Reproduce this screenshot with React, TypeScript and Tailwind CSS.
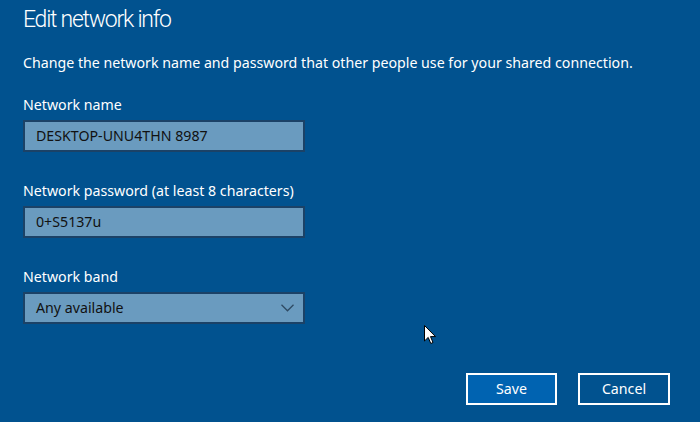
const font = { fontFamily: '"Noto Sans", "Open Sans", sans-serif' };

function Field({ label, value, select }: { label: string; value: string; select?: boolean }) {
  return (
    <div className="flex flex-col">
      <div className="text-[14.2px] leading-[20px] text-white">{label}</div>
      <div className="mt-[5px] flex h-[32px] w-[282px] items-center justify-between border-2 border-[#1b4267] bg-[#6a9bbf] pl-[11px] pr-[8px] text-[14.2px] text-[#111]">
        <span>{value}</span>
        {select && (
          <svg width="13" height="8" viewBox="0 0 13 8" className="mr-[1px]">
            <path d="M0.5 0.8 L6.5 6.8 L12.5 0.8" fill="none" stroke="#2e4a63" strokeWidth="1.3" />
          </svg>
        )}
      </div>
    </div>
  );
}

export default function App() {
  return (
    <div className="relative h-[422px] w-[700px] overflow-hidden bg-[#01528f] pl-[23px] text-white" style={font}>
      <h1
        className="mt-[2px] text-[23px] font-light leading-[36px] tracking-[-1.25px]"
        style={{ fontFamily: 'Roboto, "Noto Sans", sans-serif' }}
      >
        Edit network info
      </h1>
      <p className="mt-[15px] text-[14.2px] leading-[20px]">
        Change the network name and password that other people use for your shared connection.
      </p>
      <div className="mt-[22px] flex flex-col gap-[29px]">
        <Field label="Network name" value="DESKTOP-UNU4THN 8987" />
        <Field label="Network password (at least 8 characters)" value="0+S5137u" />
        <Field label="Network band" value="Any available" select />
      </div>
      <div className="mt-[49px] flex justify-end gap-[21px] pr-[30px]">
        <button className="h-[32px] w-[91px] border-2 border-white bg-[#0063b1] text-[14.2px] text-white">Save</button>
        <button className="h-[32px] w-[92px] border-2 border-white bg-transparent text-[14.2px] text-white">Cancel</button>
      </div>
      {/* mouse pointer */}
      <svg className="absolute left-[424px] top-[325px]" width="13" height="20" viewBox="0 0 13 20">
        <path d="M0.5 0.5 L0.5 16 L4.2 12.4 L6.8 18.5 L9 17.5 L6.5 11.6 L11.5 11.6 Z" fill="white" stroke="black" strokeWidth="1" />
      </svg>
    </div>
  );
}
